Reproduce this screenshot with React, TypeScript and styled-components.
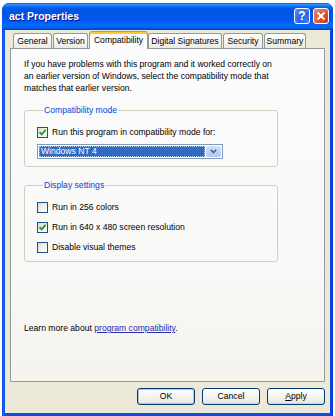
import styled, { createGlobalStyle } from "styled-components";

const GlobalStyle = createGlobalStyle`
  html, body {
    margin: 0;
    padding: 0;
    background: #ffffff;
    overflow: hidden;
  }
  body {
    font-family: "Liberation Sans", Arial, sans-serif;
  }
`;

const tabs = [
  { label: "General", width: 39 },
  { label: "Version", width: 35 },
  { label: "Compatibility", width: 59, active: true },
  { label: "Digital Signatures", width: 74 },
  { label: "Security", width: 40 },
  { label: "Summary", width: 42 },
];

function CheckMark() {
  return (
    <svg width="9" height="9" viewBox="0 0 9 9">
      <polyline
        points="1.5,4.2 3.6,6.4 7.6,1.8"
        fill="none"
        stroke="#21a121"
        strokeWidth="1.9"
      />
    </svg>
  );
}

function Check({ label, checked }: { label: string; checked?: boolean }) {
  return (
    <CheckRow>
      <CheckBox>{checked && <CheckMark />}</CheckBox>
      <span>{label}</span>
    </CheckRow>
  );
}

export default function App() {
  return (
    <>
      <GlobalStyle />
      <Window>
        <TitleBar>
          <Title>act Properties</Title>
          <Controls>
            <HelpButton>?</HelpButton>
            <CloseButton>
              <svg width="10" height="10" viewBox="0 0 10 10">
                <path d="M1.5 1.5 L8.5 8.5 M8.5 1.5 L1.5 8.5" stroke="#fff" strokeWidth="2" />
              </svg>
            </CloseButton>
          </Controls>
        </TitleBar>
        <Frame>
          <TabRow>
            {tabs.map((t) => (
              <Tab key={t.label} $width={t.width} $active={t.active}>
                {t.label}
              </Tab>
            ))}
          </TabRow>
          <Panel>
            <Intro>
              If you have problems with this program and it worked correctly on
              <br />
              an earlier version of Windows, select the compatibility mode that
              <br />
              matches that earlier version.
            </Intro>
            <Group $top={10}>
              <Legend>Compatibility mode</Legend>
              <Check label="Run this program in compatibility mode for:" checked />
              <Combo>
                <ComboValue>Windows NT 4</ComboValue>
                <ComboButton>
                  <svg width="7" height="5" viewBox="0 0 7 5">
                    <polyline points="0.8,0.8 3.5,3.6 6.2,0.8" fill="none" stroke="#4d6185" strokeWidth="1.6" />
                  </svg>
                </ComboButton>
              </Combo>
            </Group>
            <Group $top={12}>
              <Legend>Display settings</Legend>
              <Rows>
                <Check label="Run in 256 colors" />
                <Check label="Run in 640 x 480 screen resolution" checked />
                <Check label="Disable visual themes" />
              </Rows>
            </Group>
            <LearnMore>
              Learn more about <Link>program compatibility</Link>.
            </LearnMore>
          </Panel>
          <ButtonRow>
            <Button $default>OK</Button>
            <Button>Cancel</Button>
            <Button>
              <u>A</u>pply
            </Button>
          </ButtonRow>
        </Frame>
      </Window>
    </>
  );
}

const Window = styled.div`
  margin: 3px 0 0 2px;
  width: 331px;
  height: 413px;
  display: flex;
  flex-direction: column;
  border-radius: 7px 7px 0 0;
  overflow: hidden;
  background: linear-gradient(90deg, #0831d9 0px, #166aee 1px, #0b4fe4 3px, #0b4fe4 328px, #0831d9 331px);
`;

const TitleBar = styled.div`
  height: 27px;
  flex: none;
  display: flex;
  align-items: center;
  justify-content: space-between;
  padding: 0 4px 0 7px;
  background: linear-gradient(
    180deg,
    #0058ee 0%,
    #3593ff 6%,
    #127dff 10%,
    #0262ee 16%,
    #0057e5 22%,
    #0054e3 30%,
    #0055eb 56%,
    #005bf5 68%,
    #026afe 80%,
    #0062ef 90%,
    #0052d6 96%,
    #0040ab 100%
  );
`;

const Title = styled.span`
  color: #ffffff;
  font-weight: bold;
  font-size: 10.5px;
  text-shadow: 1px 1px #0f1089;
  margin-top: -1px;
`;

const Controls = styled.div`
  display: flex;
  gap: 3px;
  margin-top: -1px;
`;

const HelpButton = styled.div`
  width: 16px;
  height: 16px;
  box-sizing: border-box;
  border: 1px solid #ffffff;
  border-radius: 3px;
  background: radial-gradient(circle at 80% 85%, #3a76f5 0%, #2a63e6 45%, #5b90f8 100%);
  color: #ffffff;
  font-weight: bold;
  font-size: 12px;
  line-height: 14px;
  text-align: center;
`;

const CloseButton = styled.div`
  width: 16px;
  height: 16px;
  box-sizing: border-box;
  border: 1px solid #ffffff;
  border-radius: 3px;
  background: radial-gradient(circle at 85% 85%, #cc4418 0%, #e0552c 45%, #f08a6c 100%);
  display: flex;
  align-items: center;
  justify-content: center;
`;

const Frame = styled.div`
  flex: 1;
  display: flex;
  flex-direction: column;
  margin: 0 3px 3px;
  padding: 1px 5px 8px;
  background: #ece9d8;
  font-size: 8.6px;
  color: #000000;
`;

const TabRow = styled.div`
  display: flex;
  align-items: flex-start;
  height: 18px;
  margin-bottom: -1px;
  padding-left: 3px;
`;

const Tab = styled.div<{ $width: number; $active?: boolean }>`
  width: ${(p) => p.$width}px;
  box-sizing: border-box;
  margin-right: ${(p) => (p.$active ? 0 : 1)}px;
  margin-top: ${(p) => (p.$active ? 0 : 2)}px;
  height: ${(p) => (p.$active ? 18 : 16)}px;
  border: 1px solid #919b9c;
  border-bottom: none;
  border-radius: 3px 3px 0 0;
  text-align: center;
  white-space: nowrap;
  line-height: ${(p) => (p.$active ? 15 : 14)}px;
  background: ${(p) =>
    p.$active ? "#fcfcfe" : "linear-gradient(180deg, #ffffff 0%, #f3f3ef 60%, #e9e8e2 100%)"};
  ${(p) =>
    p.$active &&
    `
    position: relative;
    z-index: 2;
    border-top: 1px solid #e68b2c;
    box-shadow: inset 0 2px 0 #ffc83c;
    padding-top: 1px;
  `}
`;

const Panel = styled.div`
  position: relative;
  z-index: 1;
  flex: 1;
  display: flex;
  flex-direction: column;
  align-items: flex-start;
  border: 1px solid #919b9c;
  background: linear-gradient(180deg, #fcfcfe 0%, #f8f8f6 70%, #f4f3ee 100%);
  padding: 9px 0 47px 13px;
  line-height: 12px;
`;

const Intro = styled.p`
  margin: 0;
  white-space: nowrap;
`;

const Group = styled.fieldset<{ $top: number }>`
  margin: ${(p) => p.$top}px 0 0 0;
  width: 254px;
  box-sizing: border-box;
  min-width: 0;
  border: 1px solid #d0d0bf;
  border-radius: 3px;
  padding: 9px 12px 7px 12px;
`;

const Legend = styled.legend`
  color: #0046d5;
  padding: 0 1px;
  margin-left: 6px;
  line-height: 12px;
`;

const Rows = styled.div`
  display: flex;
  flex-direction: column;
  gap: 6px;
`;

const CheckRow = styled.div`
  display: flex;
  align-items: center;
  gap: 4px;
  height: 14px;
  white-space: nowrap;
`;

const CheckBox = styled.div`
  width: 11px;
  height: 11px;
  box-sizing: border-box;
  border: 1px solid #1c5180;
  background: linear-gradient(135deg, #dcdcd7 0%, #f4f4f0 60%, #ffffff 100%);
  display: flex;
  align-items: center;
  justify-content: center;
  flex: none;
`;

const Combo = styled.div`
  margin-top: 5px;
  width: 186px;
  height: 15px;
  box-sizing: border-box;
  border: 1px solid #7f9db9;
  background: #ffffff;
  display: flex;
  padding: 1px;
  gap: 1px;
`;

const ComboValue = styled.div`
  flex: 1;
  background: #316ac5;
  color: #ffffff;
  outline: 1px dotted #b8c8e8;
  outline-offset: -1px;
  padding-left: 2px;
  line-height: 11px;
`;

const ComboButton = styled.div`
  width: 15px;
  border-radius: 2px;
  background: linear-gradient(180deg, #d4e0fd 0%, #c1d3fb 50%, #b2c6f4 100%);
  display: flex;
  align-items: center;
  justify-content: center;
`;

const LearnMore = styled.div`
  margin-top: auto;
`;

const Link = styled.span`
  color: #2a2aaa;
  text-decoration: underline;
`;

const ButtonRow = styled.div`
  display: flex;
  justify-content: flex-end;
  gap: 7px;
  margin-top: 6px;
`;

const Button = styled.div<{ $default?: boolean }>`
  width: 58px;
  height: 17px;
  box-sizing: border-box;
  border: 1px solid #003c74;
  border-radius: 3px;
  background: linear-gradient(180deg, #ffffff 0%, #f4f3ee 50%, #ecebe6 85%, #d6d0c5 100%);
  text-align: center;
  line-height: 15px;
  box-shadow: ${(p) => (p.$default ? "inset 0 0 0 1px #a9c4ef" : "none")};

  u {
    text-decoration: underline;
  }
`;
